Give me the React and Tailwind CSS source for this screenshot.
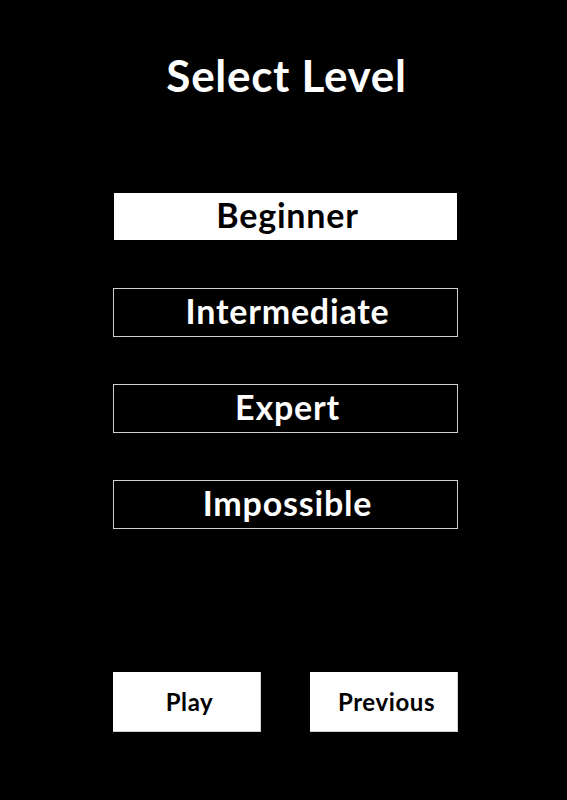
import React, { useState } from 'react';

const levels = ['Beginner', 'Intermediate', 'Expert', 'Impossible'];

const App = () => {
  const [selected, setSelected] = useState('Beginner');

  return (
    <div className="min-h-screen w-full bg-black flex flex-col items-center pt-[51px] pl-[4px] font-['Lato',sans-serif]">
      <h1 className="text-white text-[44px] leading-[48px] font-bold tracking-[0.7px] pl-[2px]">Select Level</h1>

      <div className="mt-[93px] w-[345px] flex flex-col gap-[47px]">
        {levels.map((level) => {
          const active = level === selected;
          return (
            <button
              key={level}
              onClick={() => setSelected(level)}
              className={
                active
                  ? 'h-[49px] w-full bg-white border border-black text-black text-[34px] tracking-[0.8px] font-bold leading-none flex items-center justify-center pl-[4px] pb-[3px]'
                  : 'h-[49px] w-full bg-black border border-[#d0d0d0] text-white text-[34px] tracking-[0.8px] font-bold leading-none flex items-center justify-center pl-[4px] pb-[3px]'
              }
            >
              {level}
            </button>
          );
        })}
      </div>

      <div className="mt-[143px] w-[345px] flex justify-between">
        <button className="h-[60px] w-[148px] bg-white border-r border-b border-[#cfcfcf] text-black text-[24px] tracking-[0.6px] font-bold pl-[6px] flex items-center justify-center">
          Play
        </button>
        <button className="h-[60px] w-[148px] bg-white border-r border-b border-[#cfcfcf] text-black text-[24px] tracking-[0.6px] font-bold pl-[6px] flex items-center justify-center">
          Previous
        </button>
      </div>
    </div>
  );
};

export default App;
